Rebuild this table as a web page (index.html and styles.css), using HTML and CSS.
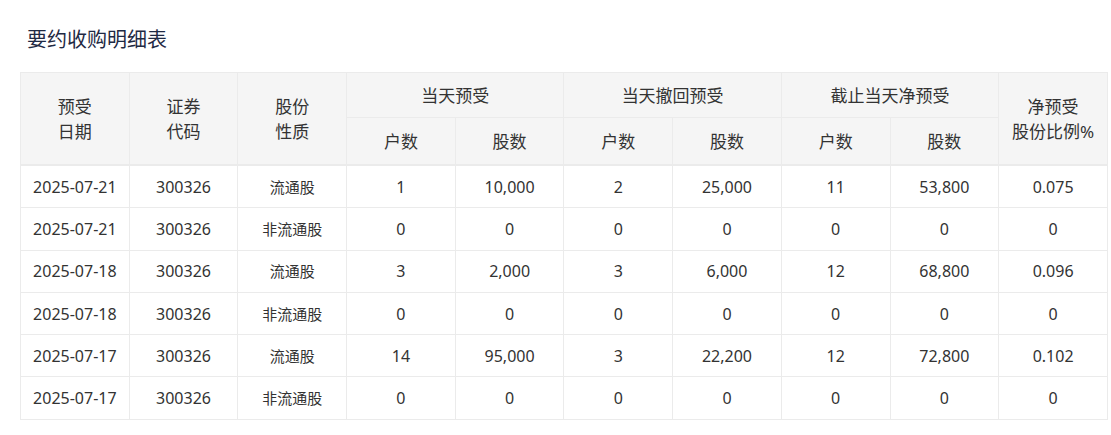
FILE: index.html
```html
<!DOCTYPE html>
<html lang="zh-CN">
<head>
<meta charset="utf-8">
<title>要约收购明细表</title>
<link rel="stylesheet" href="styles.css">
</head>
<body>
<div class="page">
  <h2 class="title">要约收购明细表</h2>
  <table class="detail">
    <colgroup>
      <col><col><col><col><col><col><col><col><col><col>
    </colgroup>
    <thead>
      <tr class="head-top">
        <th rowspan="2">预受<br>日期</th>
        <th rowspan="2">证券<br>代码</th>
        <th rowspan="2">股份<br>性质</th>
        <th colspan="2">当天预受</th>
        <th colspan="2">当天撤回预受</th>
        <th colspan="2">截止当天净预受</th>
        <th rowspan="2">净预受<br>股份比例%</th>
      </tr>
      <tr class="head-sub">
        <th>户数</th><th>股数</th>
        <th>户数</th><th>股数</th>
        <th>户数</th><th>股数</th>
      </tr>
    </thead>
    <tbody>
      <tr><td>2025-07-21</td><td>300326</td><td>流通股</td><td>1</td><td>10,000</td><td>2</td><td>25,000</td><td>11</td><td>53,800</td><td>0.075</td></tr>
      <tr><td>2025-07-21</td><td>300326</td><td>非流通股</td><td>0</td><td>0</td><td>0</td><td>0</td><td>0</td><td>0</td><td>0</td></tr>
      <tr><td>2025-07-18</td><td>300326</td><td>流通股</td><td>3</td><td>2,000</td><td>3</td><td>6,000</td><td>12</td><td>68,800</td><td>0.096</td></tr>
      <tr><td>2025-07-18</td><td>300326</td><td>非流通股</td><td>0</td><td>0</td><td>0</td><td>0</td><td>0</td><td>0</td><td>0</td></tr>
      <tr><td>2025-07-17</td><td>300326</td><td>流通股</td><td>14</td><td>95,000</td><td>3</td><td>22,200</td><td>12</td><td>72,800</td><td>0.102</td></tr>
      <tr><td>2025-07-17</td><td>300326</td><td>非流通股</td><td>0</td><td>0</td><td>0</td><td>0</td><td>0</td><td>0</td><td>0</td></tr>
    </tbody>
  </table>
</div>
</body>
</html>
```

FILE: styles.css
```css
html, body {
  margin: 0;
  padding: 0;
  background: #ffffff;
}

body {
  font-family: "Noto Sans", "Noto Sans CJK SC", sans-serif;
  color: #333333;
}

.page {
  padding: 0 0 0 20px;
}

.title {
  margin: 0;
  padding: 27px 0 0 7px;
  height: 72px;
  box-sizing: border-box;
  font-size: 20px;
  font-weight: normal;
  line-height: 26px;
  color: #1f2a44;
}

.detail {
  width: 1088px;
  table-layout: fixed;
  border-collapse: collapse;
  border: 1px solid #e8e8e8;
}

.detail th,
.detail td {
  border: 1px solid #ebebeb;
  text-align: center;
  padding: 0;
}

.detail th {
  background: #f5f5f5;
  font-weight: normal;
  font-size: 17px;
  line-height: 25px;
  color: #333333;
}

.head-top th {
  height: 44px;
}

.head-sub th {
  height: 46px;
  border-bottom: 2px solid #ebebeb;
}

.head-top th[rowspan] {
  border-bottom: 2px solid #ebebeb;
}

.detail td {
  height: 41.3px;
  font-size: 16px;
  line-height: 20px;
  color: #333333;
}

.detail td:nth-child(3) {
  font-size: 15px;
}
```
